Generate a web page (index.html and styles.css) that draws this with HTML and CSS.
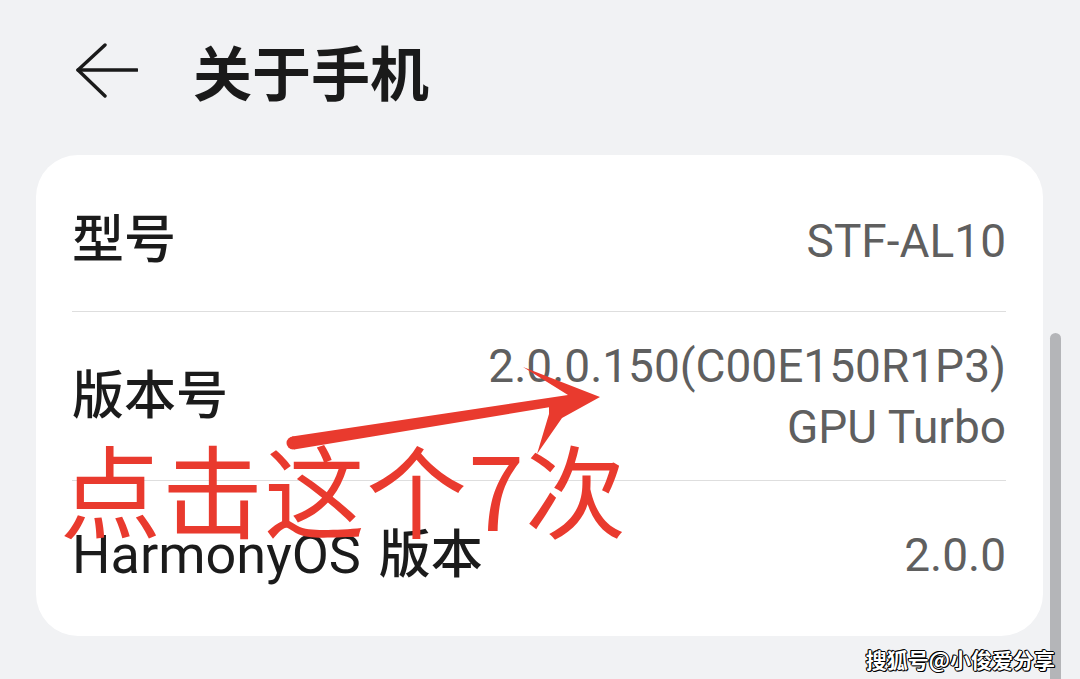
FILE: index.html
```html
<!DOCTYPE html>
<html lang="zh-CN">
  <head>
    <meta charset="UTF-8" />
    <meta name="viewport" content="width=device-width, initial-scale=1.0" />
    <title>关于手机</title>
    <link rel="stylesheet" href="styles.css">
  </head>
  <body>
    <div class="screen">
      <header class="topbar">
        <svg class="back-icon" viewBox="0 0 62 56" width="62" height="56">
          <polyline points="29,2 2,27 29,53" />
          <line x1="2" y1="27" x2="61" y2="27" />
        </svg>
        <h1 class="title">关于手机</h1>
      </header>

      <section class="card">
        <div class="row row-model">
          <span class="label">型号</span>
          <span class="value">STF-AL10</span>
        </div>
        <div class="row row-build">
          <span class="label">版本号</span>
          <div class="value">
            <div>2.0.0.150(C00E150R1P3)</div>
            <div>GPU Turbo</div>
          </div>
        </div>
        <div class="row row-os">
          <span class="label"><span class="label-latin">HarmonyOS</span> 版本</span>
          <span class="value">2.0.0</span>
        </div>
      </section>

      <div class="scroll-thumb"></div>

      <!-- red hand-drawn note on top of the screenshot -->
      <svg class="mark-arrow" viewBox="0 0 1080 679" width="1080" height="679">
        <circle cx="293" cy="443" r="6.5" />
        <polygon points="292,436.5 568,395 523,367 600,397 562,418 537,454 549,414 549,407.3 294,449.5" />
      </svg>
      <div class="mark-text">点击这个7次</div>

      <div class="watermark">搜狐号@小俊爱分享</div>
    </div>
  </body>
</html>
```

FILE: styles.css
```css
body, html {
    margin: 0;
    padding: 0;
    background-color: #f1f2f4;
    font-family: 'Roboto', 'Noto Sans CJK SC', sans-serif;
}

.screen {
    position: relative;
    width: 1080px;
    height: 679px;
    overflow: hidden;
}

.topbar {
    display: flex;
    align-items: center;
    height: 141px;
    padding-left: 76px;
}

.back-icon {
    fill: none;
    stroke: #1a1a1a;
    stroke-width: 3.4;
    stroke-linecap: round;
    stroke-linejoin: round;
}

.title {
    margin: 0 0 0 55px;
    font-family: 'Noto Sans CJK SC', sans-serif;
    font-size: 59px;
    font-weight: 700;
    line-height: 1;
    color: #1a1a1a;
}

.card {
    margin: 14px 37px 0 36px;
    padding: 16px 37px 6px 36px;
    background-color: #ffffff;
    border-radius: 42px;
}

.row {
    display: flex;
    justify-content: space-between;
    align-items: center;
    box-sizing: border-box;
    min-height: 141px;
    border-bottom: 1px solid #dedede;
}

.row-build {
    padding: 24px 0 22px;
}

.row-os {
    min-height: 149px;
    border-bottom: none;
}

.label {
    font-family: 'Roboto', 'Noto Sans CJK SC', sans-serif;
    font-size: 52px;
    font-weight: 500;
    line-height: 60px;
    color: #1b1b1b;
}

.label-latin {
    margin-right: 5px;
    font-size: 54px;
    font-weight: 400;
}

.value {
    font-family: 'Roboto', sans-serif;
    font-size: 46px;
    line-height: 61px;
    color: #5f5f5f;
    text-align: right;
}

.scroll-thumb {
    position: absolute;
    left: 1050px;
    top: 333px;
    width: 11px;
    height: 360px;
    background-color: #b4b5b8;
    border-radius: 6px 6px 0 0;
}

.mark-arrow {
    position: absolute;
    left: 0;
    top: 0;
    fill: #e93a2e;
    pointer-events: none;
}

.mark-text {
    position: absolute;
    left: 60px;
    top: 437px;
    font-family: 'Noto Sans CJK SC', sans-serif;
    font-size: 101px;
    font-weight: 400;
    line-height: 1;
    letter-spacing: 1px;
    color: #e93a2e;
    white-space: nowrap;
}

.watermark {
    position: absolute;
    right: 25px;
    bottom: 9px;
    font-family: 'Noto Sans CJK SC', sans-serif;
    font-size: 21px;
    font-weight: 700;
    line-height: 1;
    color: #ffffff;
    text-shadow: 1px 0 0 #000, -1px 0 0 #000, 0 1px 0 #000, 0 -1px 0 #000, 1px 1px 0 #000, -1px -1px 0 #000;
}
```
